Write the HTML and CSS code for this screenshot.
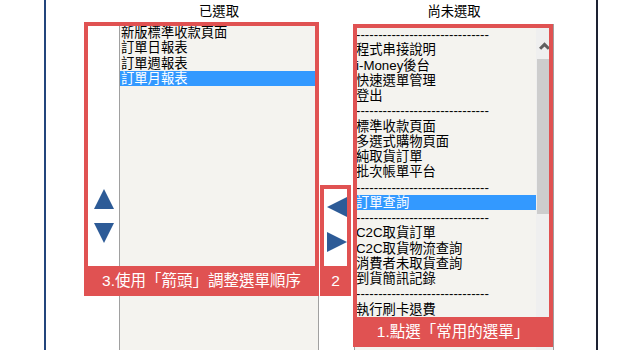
FILE: index.html
```html
<!DOCTYPE html>
<html lang="zh-Hant">
<head>
  <meta charset="UTF-8">
  <meta name="viewport" content="width=device-width, initial-scale=1.0">
  <title>選單設定</title>
  <link rel="stylesheet" href="styles.css">
</head>
<body>
  <div class="frame">
    <div class="picker">
      <div class="tools tools-order">
        <svg class="arrow" viewBox="0 0 20 20"><polygon points="10,0 20,20 0,20"/></svg>
        <svg class="arrow" viewBox="0 0 20 20"><polygon points="0,0 20,0 10,20"/></svg>
      </div>

      <div class="column">
        <div class="column-title">已選取</div>
        <div class="listbox">
          <ul class="options">
            <li>新版標準收款頁面</li>
            <li>訂單日報表</li>
            <li>訂單週報表</li>
            <li class="selected">訂單月報表</li>
          </ul>
        </div>
      </div>

      <div class="tools tools-move">
        <svg class="arrow" viewBox="0 0 20 20"><polygon points="0,10 20,0 20,20"/></svg>
        <svg class="arrow" viewBox="0 0 20 20"><polygon points="0,0 20,10 0,20"/></svg>
      </div>

      <div class="column">
        <div class="column-title">尚未選取</div>
        <div class="listbox listbox-scroll">
          <ul class="options">
            <li>------------------------------</li>
            <li>程式串接說明</li>
            <li>i-Money後台</li>
            <li>快速選單管理</li>
            <li>登出</li>
            <li>------------------------------</li>
            <li>標準收款頁面</li>
            <li>多選式購物頁面</li>
            <li>純取貨訂單</li>
            <li>批次帳單平台</li>
            <li>------------------------------</li>
            <li class="selected">訂單查詢</li>
            <li>------------------------------</li>
            <li>C2C取貨訂單</li>
            <li>C2C取貨物流查詢</li>
            <li>消費者未取貨查詢</li>
            <li>到貨簡訊記錄</li>
            <li>------------------------------</li>
            <li>執行刷卡退費</li>
          </ul>
          <div class="scrollbar">
            <svg class="scroll-up" viewBox="0 0 10 7"><polyline points="1,6 5,2 9,6"/></svg>
            <div class="scroll-thumb"></div>
          </div>
        </div>
      </div>
    </div>

    <!-- annotations drawn over the picker -->
    <div class="note note-order">
      <div class="note-label">3.使用「箭頭」調整選單順序</div>
    </div>
    <div class="note note-move">
      <div class="note-label">2</div>
    </div>
    <div class="note note-pick">
      <div class="note-label">1.點選「常用的選單」</div>
    </div>
  </div>
</body>
</html>
```

FILE: styles.css
```css
body {
  margin: 0;
  font-family: "Liberation Sans", "Noto Sans CJK TC", sans-serif;
  font-size: 13.3px;
  color: #000;
  background: #fff;
}

.frame {
  position: relative;
  margin-left: 44px;
  width: 550px;
  height: 350px;
  border-left: 2px solid #23457c;
  border-right: 2px solid #1d2233;
  overflow: hidden;
}

.picker {
  display: flex;
  padding-left: 42px;
}

.tools {
  display: flex;
  flex-direction: column;
  align-items: center;
}

.tools-order {
  width: 31px;
  padding-top: 189px;
  gap: 14px;
}

.tools-move {
  width: 35px;
  padding-top: 197px;
  gap: 15px;
}

.arrow {
  display: block;
  width: 20px;
  height: 20px;
  fill: #2d5b97;
}

.column {
  width: 200px;
}

.column-title {
  height: 20px;
  padding-top: 4px;
  line-height: 15px;
  text-align: center;
}

.listbox {
  box-sizing: border-box;
  height: 330px;
  background: #f4f3ef;
  border: 1px solid #a0a0a0;
}

.options {
  list-style: none;
  margin: 0;
  padding: 0;
}

.options li {
  padding-left: 1px;
  line-height: 15.25px;
  white-space: nowrap;
}

.options li.selected {
  background: #3399ff;
  color: #fff;
}

.listbox-scroll {
  display: flex;
}

.listbox-scroll .options {
  flex: 1;
  padding-top: 2px;
  overflow: hidden;
}

.scrollbar {
  width: 17px;
  background: #efefef;
}

.scroll-up {
  display: block;
  width: 11px;
  height: 8px;
  margin: 17px auto 9px;
  fill: none;
  stroke: #606060;
  stroke-width: 2.8;
}

.scroll-thumb {
  height: 155px;
  margin-left: 1px;
  width: 15px;
  background: #cdcdcd;
}

.note {
  position: absolute;
  box-sizing: border-box;
  display: flex;
  flex-direction: column;
  justify-content: flex-end;
  border: 4px solid #e05252;
  border-bottom: 0;
}

.note-label {
  height: 30px;
  line-height: 30px;
  margin: 0 -4px;
  background: #e05252;
  color: #fff;
  font-size: 15.5px;
  text-align: center;
  white-space: nowrap;
}

.note-order {
  left: 38px;
  top: 22px;
  width: 235px;
  height: 274px;
}

.note-move {
  left: 274px;
  top: 185px;
  width: 31px;
  height: 111px;
}

.note-pick {
  left: 307px;
  top: 24px;
  width: 200px;
  height: 323px;
}
```
